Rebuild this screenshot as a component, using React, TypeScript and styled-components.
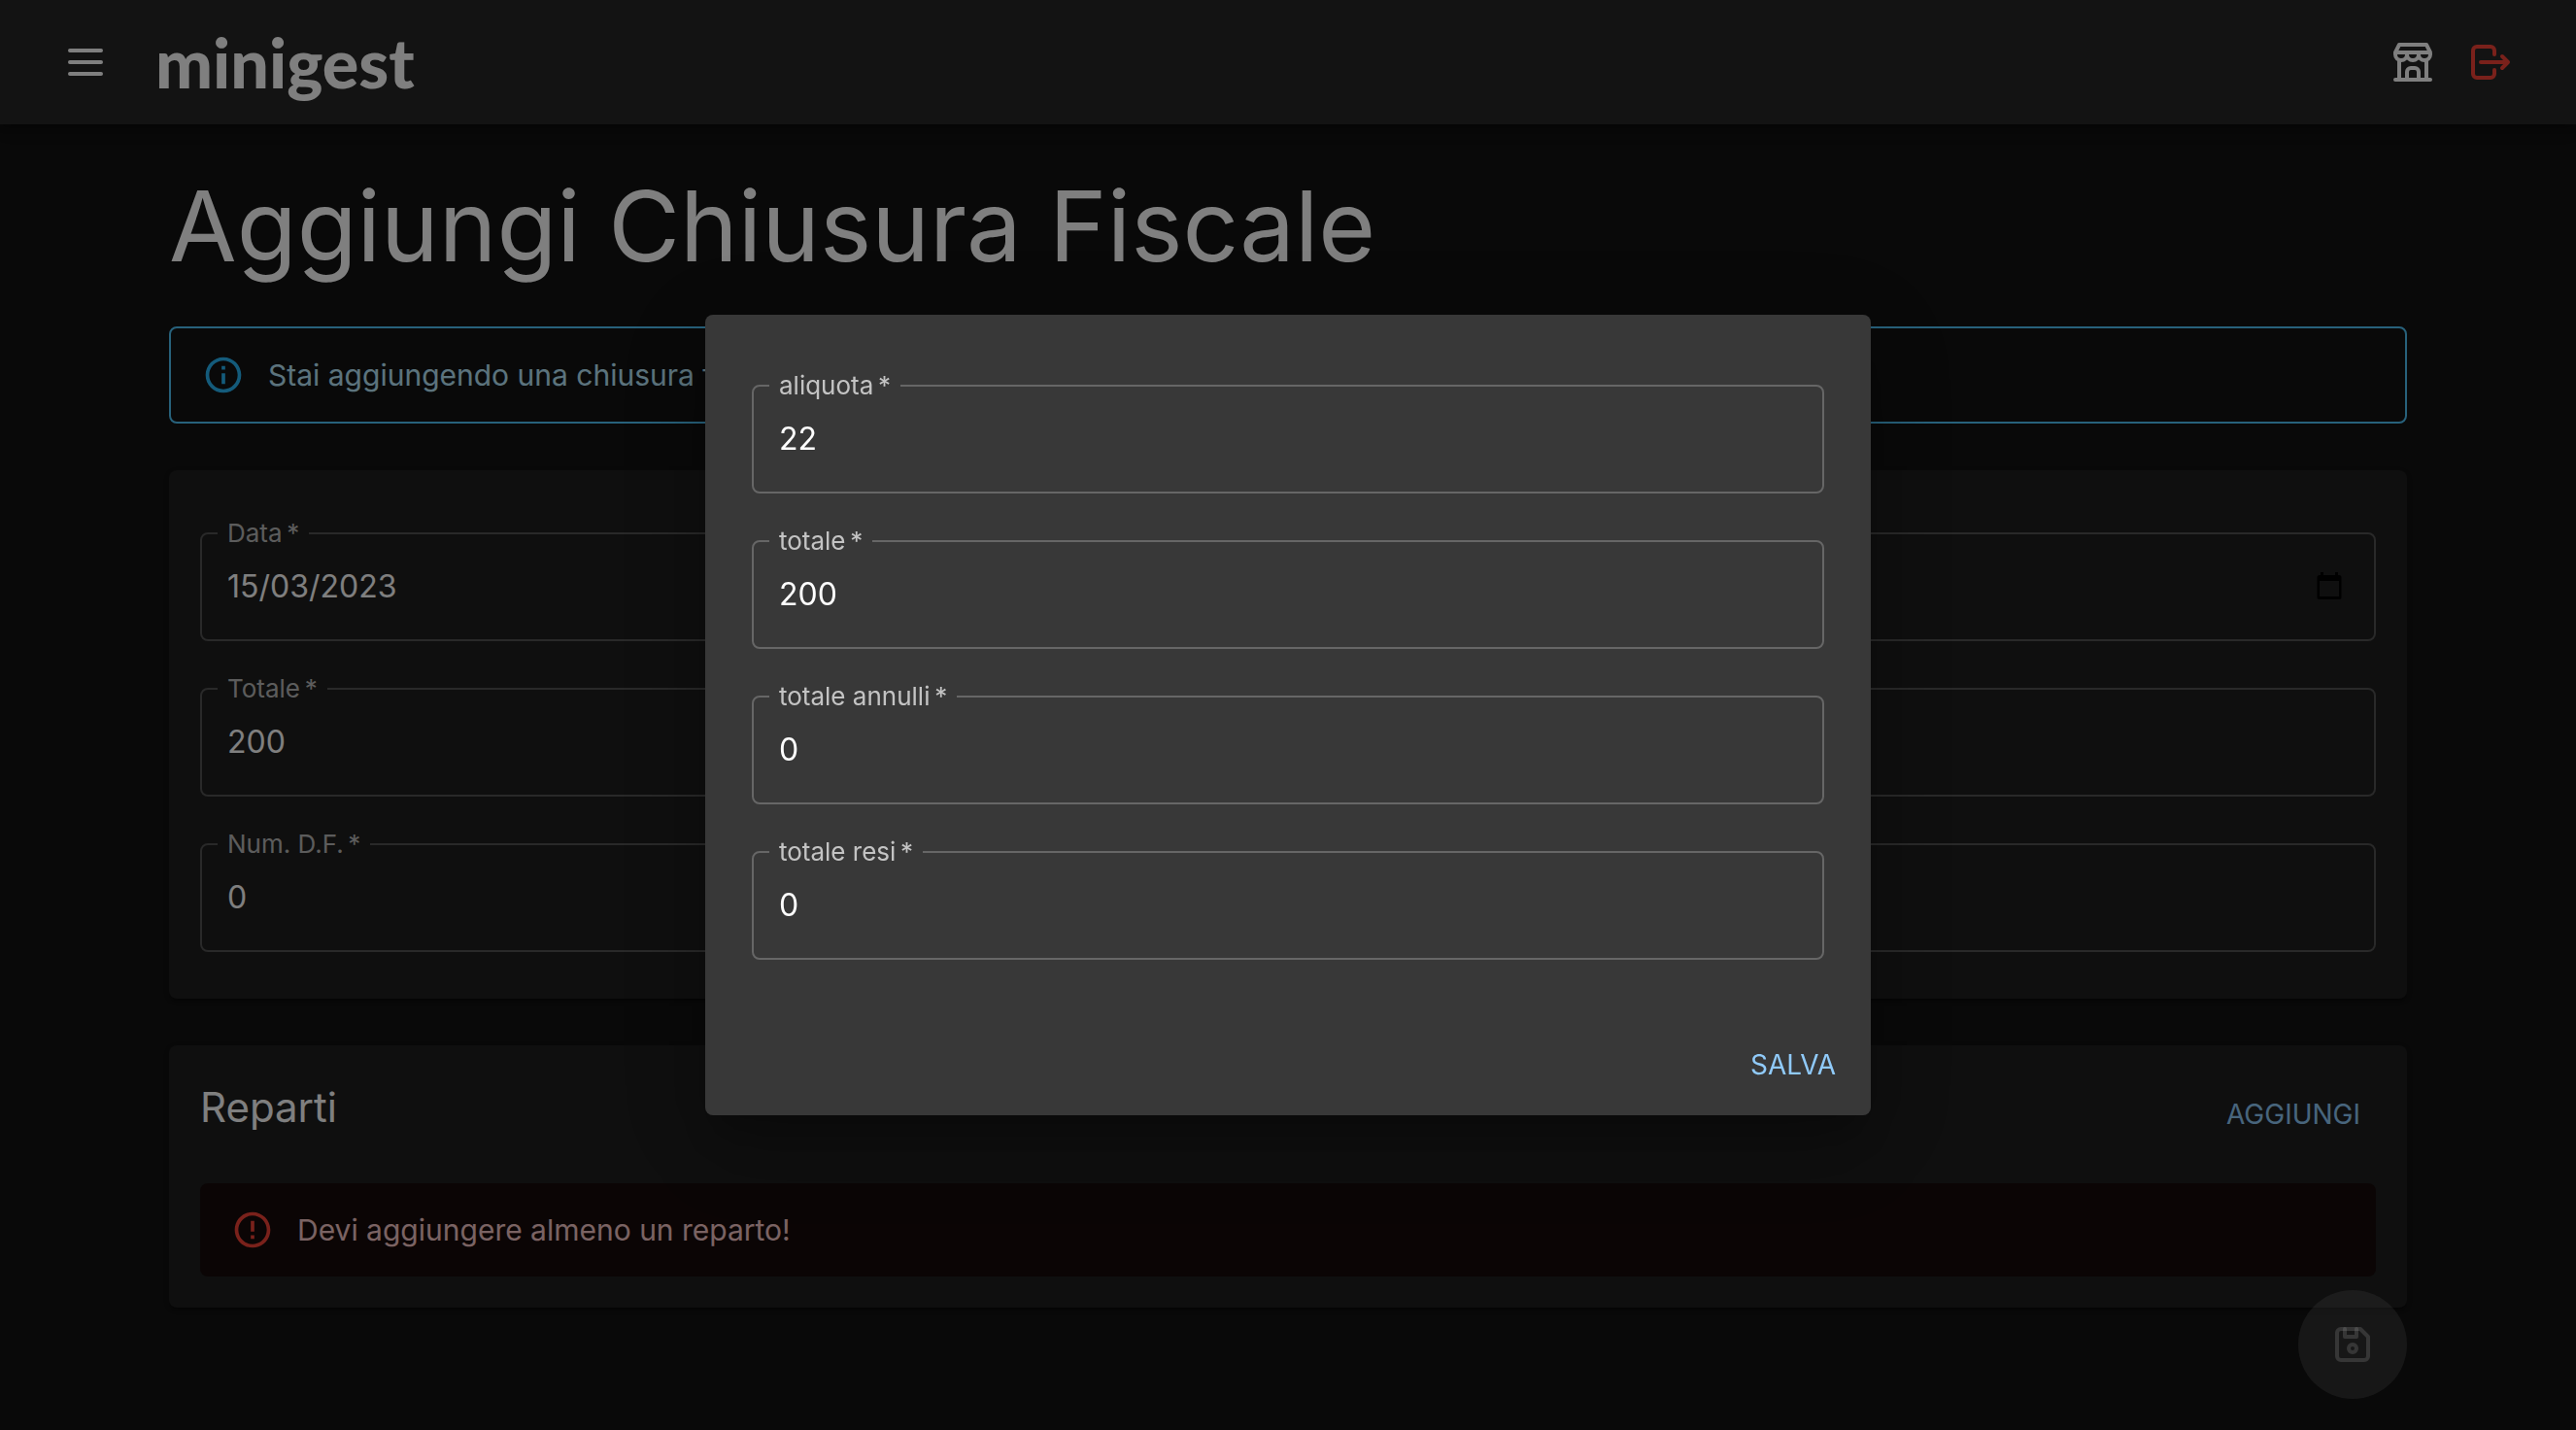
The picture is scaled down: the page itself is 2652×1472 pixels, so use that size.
import React, { useState } from "react";
import styled, { createGlobalStyle } from "styled-components";

const GlobalStyle = createGlobalStyle`
  *, *::before, *::after { box-sizing: border-box; }
  body {
    margin: 0;
    background: #121212;
    color: #fff;
    font-family: Inter, "Liberation Sans", sans-serif;
    font-size: 30px;
  }
  button, input { font: inherit; color: inherit; }
`;

const Page = styled.div`
  min-height: 100vh;
`;

const TopBar = styled.header`
  display: flex;
  align-items: center;
  height: 128px;
  padding: 0 48px;
  background: #272727;
  box-shadow: 0 4px 8px -2px rgba(0, 0, 0, 0.2), 0 8px 10px rgba(0, 0, 0, 0.14),
    0 2px 20px rgba(0, 0, 0, 0.12);
`;

const IconButton = styled.button<{ $color?: string }>`
  display: flex;
  padding: 16px;
  border: 0;
  border-radius: 50%;
  background: none;
  color: ${(p) => p.$color ?? "#fff"};
  cursor: pointer;
`;

const Brand = styled.a`
  margin: 0 auto 0 32px;
  color: #fff;
  font-family: Lato, sans-serif;
  font-size: 70px;
  font-weight: 900;
  line-height: 80px;
  text-decoration: none;
`;

const StrokeIcon = styled.svg`
  display: block;
  width: 48px;
  height: 48px;
  fill: none;
  stroke: currentColor;
  stroke-width: 2;
  stroke-linecap: round;
  stroke-linejoin: round;
`;

const Main = styled.main`
  display: flex;
  flex-direction: column;
  gap: 48px;
  max-width: 2400px;
  margin: 0 auto;
  padding: 48px;
`;

const Title = styled.h1`
  margin: 0;
  font-size: 101px;
  font-weight: 400;
  line-height: 112px;
`;

const Alert = styled.div<{ $tone: "info" | "error" }>`
  display: flex;
  align-items: center;
  gap: 24px;
  padding: 26px 32px;
  border-radius: 8px;
  border: ${(p) => (p.$tone === "info" ? "2px solid #4fc3f7" : "0")};
  background: ${(p) => (p.$tone === "info" ? "none" : "#160b0b")};
  color: ${(p) => (p.$tone === "info" ? "#b8e7fb" : "#f4c7c7")};
  line-height: 44px;
`;

const AlertIcon = styled.svg<{ $color: string }>`
  width: 44px;
  height: 44px;
  fill: ${(p) => p.$color};
`;

const Card = styled.section`
  border-radius: 8px;
  background: #1e1e1e;
  box-shadow: 0 4px 2px -2px rgba(0, 0, 0, 0.2), 0 2px 2px rgba(0, 0, 0, 0.14),
    0 2px 6px rgba(0, 0, 0, 0.12);
`;

const FormCard = styled(Card)`
  padding: 52px 32px 48px;
`;

const ListCard = styled(Card)`
  padding: 32px;
`;

const Fields = styled.form`
  display: flex;
  flex-direction: column;
  gap: 36px;
`;

const Outline = styled.fieldset`
  display: flex;
  align-items: center;
  min-width: 0;
  margin: 0;
  padding: 0 0 14px;
  border: 2px solid rgba(255, 255, 255, 0.23);
  border-radius: 8px;
`;

const Legend = styled.legend`
  margin-left: 16px;
  padding: 0 10px;
  color: rgba(255, 255, 255, 0.7);
  font-size: 26px;
  line-height: 26px;
`;

const Input = styled.input`
  flex: 1;
  min-width: 0;
  height: 82px;
  padding: 0 26px;
  border: 0;
  outline: 0;
  background: none;
  font-size: 32px;
`;

const CalendarButton = styled.button`
  display: flex;
  margin-right: 26px;
  padding: 0;
  border: 0;
  background: none;
  color: #000;
  cursor: pointer;
`;

const CalendarIcon = styled.svg`
  width: 40px;
  height: 40px;
  fill: currentColor;
`;

const ListHeader = styled.div`
  display: flex;
  align-items: center;
  justify-content: space-between;
  height: 78px;
  margin-bottom: 32px;
`;

const Subtitle = styled.h2`
  align-self: flex-start;
  margin: 0;
  font-size: 42px;
  font-weight: 400;
  line-height: 64px;
`;

const TextButton = styled.button`
  min-width: 128px;
  height: 72px;
  padding: 0 16px;
  border: 0;
  border-radius: 8px;
  background: none;
  color: #90caf9;
  font-size: 28px;
  text-transform: uppercase;
  cursor: pointer;
`;

const Fab = styled.button`
  position: fixed;
  right: max(48px, calc((100vw - 2304px) / 2));
  bottom: 32px;
  display: flex;
  align-items: center;
  justify-content: center;
  width: 112px;
  height: 112px;
  border: 0;
  border-radius: 50%;
  background: rgba(255, 255, 255, 0.12);
  color: rgba(255, 255, 255, 0.3);
`;

const Backdrop = styled.div`
  position: fixed;
  inset: 0;
  display: flex;
  align-items: center;
  justify-content: center;
  background: rgba(0, 0, 0, 0.5);
`;

const Dialog = styled.div`
  width: 1200px;
  max-width: calc(100% - 128px);
  border-radius: 8px;
  background: #383838;
  box-shadow: 0 22px 30px -14px rgba(0, 0, 0, 0.2), 0 48px 76px 6px rgba(0, 0, 0, 0.14),
    0 18px 92px 16px rgba(0, 0, 0, 0.12);
`;

const DialogContent = styled.div`
  padding: 60px 48px 56px;
`;

const DialogActions = styled.div`
  display: flex;
  justify-content: flex-end;
  padding: 16px;
`;

function Field({
  id,
  label,
  initial,
  children,
}: {
  id: string;
  label: string;
  initial: string;
  children?: React.ReactNode;
}) {
  const [value, setValue] = useState(initial);
  return (
    <Outline>
      <Legend>
        <label htmlFor={id}>{label}&thinsp;*</label>
      </Legend>
      <Input id={id} required value={value} onChange={(e) => setValue(e.target.value)} />
      {children}
    </Outline>
  );
}

export default function App() {
  return (
    <>
      <GlobalStyle />
      <Page>
        <TopBar>
          <IconButton type="button" aria-label="Menu">
            <StrokeIcon viewBox="0 0 24 24">
              <path d="M4 6h16M4 12h16M4 18h16" />
            </StrokeIcon>
          </IconButton>
          <Brand href="#">minigest</Brand>
          <IconButton type="button" aria-label="Negozio">
            <StrokeIcon viewBox="0 0 24 24">
              <path d="M3 21h18" />
              <path d="M3 7v1a3 3 0 0 0 6 0v-1m0 1a3 3 0 0 0 6 0v-1m0 1a3 3 0 0 0 6 0v-1h-18l2 -4h14l2 4" />
              <path d="M5 21v-10.15" />
              <path d="M19 21v-10.15" />
              <path d="M9 21v-4a2 2 0 0 1 2 -2h2a2 2 0 0 1 2 2v4" />
            </StrokeIcon>
          </IconButton>
          <IconButton type="button" aria-label="Esci" $color="#f44336">
            <StrokeIcon viewBox="0 0 24 24">
              <path d="M14 8v-2a2 2 0 0 0 -2 -2h-7a2 2 0 0 0 -2 2v12a2 2 0 0 0 2 2h7a2 2 0 0 0 2 -2v-2" />
              <path d="M7 12h14l-3 -3m0 6l3 -3" />
            </StrokeIcon>
          </IconButton>
        </TopBar>

        <Main>
          <Title>Aggiungi Chiusura Fiscale</Title>

          <Alert $tone="info" role="status">
            <AlertIcon viewBox="0 0 24 24" $color="#29b6f6">
              <path d="M11 7h2v2h-2zM11 11h2v6h-2zM12 2C6.48 2 2 6.48 2 12s4.48 10 10 10 10-4.48 10-10S17.52 2 12 2zm0 18c-4.41 0-8-3.59-8-8s3.59-8 8-8 8 3.59 8 8-3.59 8-8 8z" />
            </AlertIcon>
            <span>Stai aggiungendo una chiusura fiscale</span>
          </Alert>

          <FormCard>
            <Fields>
              <Field id="data" label="Data" initial="15/03/2023">
                <CalendarButton type="button" aria-label="Apri calendario">
                  <CalendarIcon viewBox="0 0 40 40">
                    <path d="M11 6h3v3h12v-3h3v3h1a2.5 2.5 0 0 1 2.5 2.5v20a2.5 2.5 0 0 1 -2.5 2.5h-20a2.5 2.5 0 0 1 -2.5 -2.5v-20a2.5 2.5 0 0 1 2.5 -2.5h1zM10 15v16h20v-16z" fillRule="evenodd" />
                  </CalendarIcon>
                </CalendarButton>
              </Field>
              <Field id="totale" label="Totale" initial="200" />
              <Field id="num-df" label="Num. D.F." initial="0" />
            </Fields>
          </FormCard>

          <ListCard>
            <ListHeader>
              <Subtitle>Reparti</Subtitle>
              <TextButton type="button">Aggiungi</TextButton>
            </ListHeader>
            <Alert $tone="error" role="alert">
              <AlertIcon viewBox="0 0 24 24" $color="#f44336">
                <path d="M11 15h2v2h-2zm0-8h2v6h-2zm.99-5C6.47 2 2 6.48 2 12s4.47 10 9.99 10C17.52 22 22 17.52 22 12S17.52 2 11.99 2zM12 20c-4.42 0-8-3.58-8-8s3.58-8 8-8 8 3.58 8 8-3.58 8-8 8z" />
              </AlertIcon>
              <span>Devi aggiungere almeno un reparto!</span>
            </Alert>
          </ListCard>
        </Main>

        <Fab type="button" disabled aria-label="Salva chiusura">
          <StrokeIcon viewBox="0 0 24 24">
            <path d="M6 4h10l4 4v10a2 2 0 0 1 -2 2h-12a2 2 0 0 1 -2 -2v-12a2 2 0 0 1 2 -2" />
            <circle cx="12" cy="14" r="2" />
            <path d="M14 4v4h-6v-4" />
          </StrokeIcon>
        </Fab>
      </Page>

      <Backdrop>
        <Dialog role="dialog" aria-modal="true" aria-label="Aggiungi reparto">
          <DialogContent>
            <Fields id="reparto">
              <Field id="reparto-aliquota" label="aliquota" initial="22" />
              <Field id="reparto-totale" label="totale" initial="200" />
              <Field id="reparto-annulli" label="totale annulli" initial="0" />
              <Field id="reparto-resi" label="totale resi" initial="0" />
            </Fields>
          </DialogContent>
          <DialogActions>
            <TextButton type="submit" form="reparto">Salva</TextButton>
          </DialogActions>
        </Dialog>
      </Backdrop>
    </>
  );
}
